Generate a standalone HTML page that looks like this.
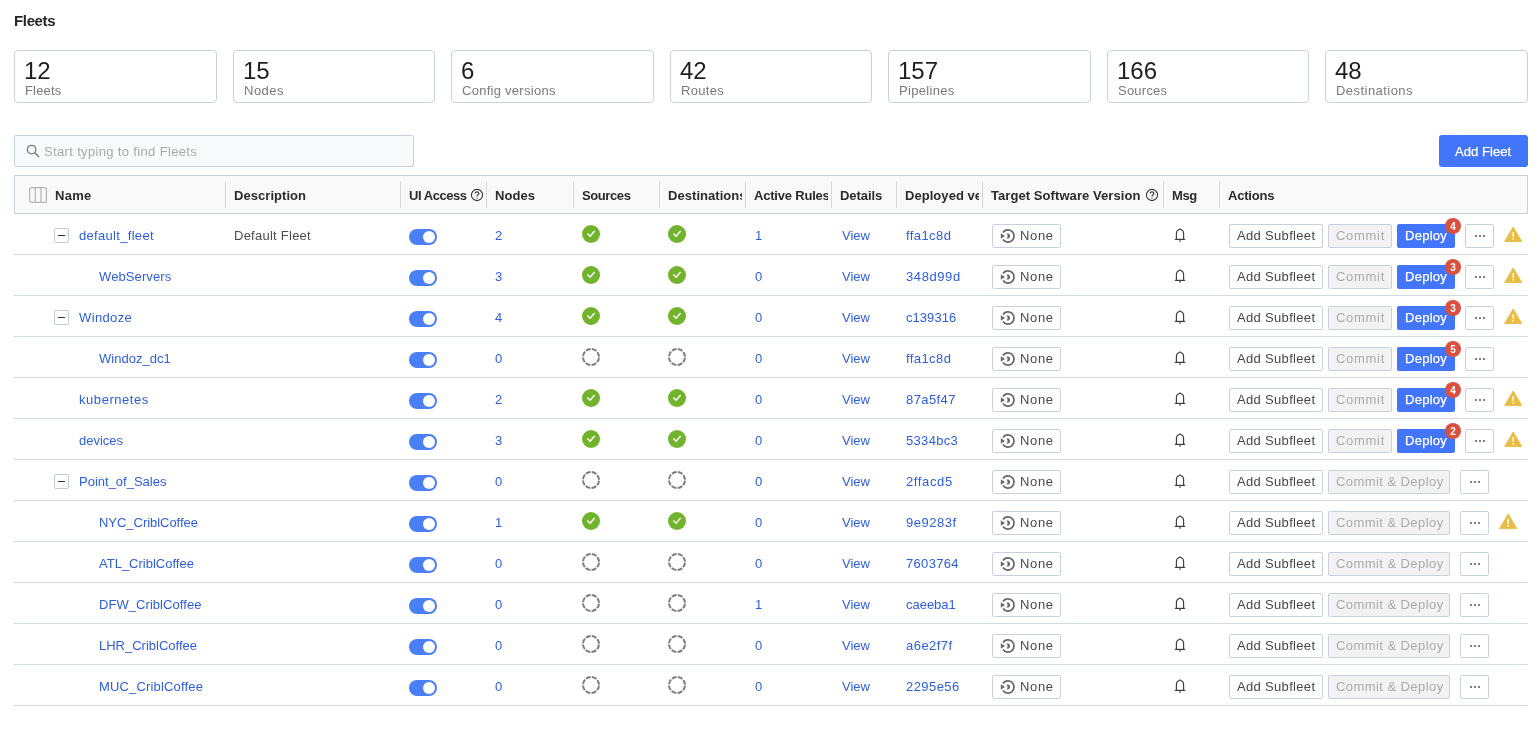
<!DOCTYPE html><html><head><meta charset="utf-8"><style>
html,body{margin:0;padding:0;background:#fff;}
body{width:1540px;height:732px;overflow:hidden;position:relative;font-family:"Liberation Sans", sans-serif;}
#root{position:absolute;left:0;top:0;width:1540px;height:732px;will-change:transform;background:#fff;}
.t{position:absolute;white-space:nowrap;}
.ic{position:absolute;display:block;}
.card{position:absolute;top:50px;height:53px;border:1px solid #c9d1dc;border-radius:4px;box-sizing:border-box;}
.search{position:absolute;left:14px;top:135px;width:398px;height:30px;border:1px solid #c9d1dc;background:#f9fafb;border-radius:2px;}
.btnp{position:absolute;background:#4275fa;border-radius:3px;}
.thead{position:absolute;left:14px;top:175px;width:1512px;height:37px;border:1px solid #c9d1dc;background:#f9f9fa;}
.sep{position:absolute;top:181px;width:1px;height:27px;background:#d6d9dd;}
.hclip{position:absolute;top:176px;height:37px;overflow:hidden;}
.rline{position:absolute;left:14px;width:1514px;height:1px;background:#d3d9e1;}
.cbox{position:absolute;left:54px;width:13px;height:13px;border:1px solid #c3cad4;border-radius:2px;background:#fff;}
.cbox::after{content:"";position:absolute;left:3px;top:5.5px;width:7px;height:1.2px;background:#333;}
.tog{position:absolute;left:409px;width:28px;height:16px;border-radius:8px;background:#4a7ff6;}
.knob{position:absolute;left:14px;top:2px;width:12px;height:12px;border-radius:6px;background:#fff;}
.btn{position:absolute;border:1px solid #c9d1dc;border-radius:2px;background:#fff;box-sizing:border-box;}
.btn.dis{background:#f2f2f2;}
.badge{position:absolute;width:16px;height:16px;border-radius:8px;background:#d9503f;color:#fff;font-size:10px;font-weight:700;line-height:18px;text-align:center;font-family:"Liberation Sans", sans-serif;}
.dot{position:absolute;width:2px;height:2px;border-radius:50%;background:#555;}
</style></head><body><div id="root"><div class="t" style="left:14px;top:13px;font-size:15px;line-height:15px;font-weight:700;color:#262626;letter-spacing:-0.35px;">Fleets</div>
<div class="card" style="left:14.00px;width:202.57px"></div>
<div class="t" style="left:24px;top:59px;font-size:24px;line-height:24px;font-weight:400;color:#1e1e1e;letter-spacing:0px;">12</div>
<div class="t" style="left:25px;top:84px;font-size:13px;line-height:13px;font-weight:400;color:#7a7a7a;letter-spacing:0.18px;">Fleets</div>
<div class="card" style="left:232.57px;width:202.57px"></div>
<div class="t" style="left:243px;top:59px;font-size:24px;line-height:24px;font-weight:400;color:#1e1e1e;letter-spacing:0px;">15</div>
<div class="t" style="left:244px;top:84px;font-size:13px;line-height:13px;font-weight:400;color:#7a7a7a;letter-spacing:0.5px;">Nodes</div>
<div class="card" style="left:451.14px;width:202.57px"></div>
<div class="t" style="left:461px;top:59px;font-size:24px;line-height:24px;font-weight:400;color:#1e1e1e;letter-spacing:0px;">6</div>
<div class="t" style="left:462px;top:84px;font-size:13px;line-height:13px;font-weight:400;color:#7a7a7a;letter-spacing:0.271px;">Config versions</div>
<div class="card" style="left:669.71px;width:202.57px"></div>
<div class="t" style="left:680px;top:59px;font-size:24px;line-height:24px;font-weight:400;color:#1e1e1e;letter-spacing:0px;">42</div>
<div class="t" style="left:681px;top:84px;font-size:13px;line-height:13px;font-weight:400;color:#7a7a7a;letter-spacing:0.3px;">Routes</div>
<div class="card" style="left:888.29px;width:202.57px"></div>
<div class="t" style="left:898px;top:59px;font-size:24px;line-height:24px;font-weight:400;color:#1e1e1e;letter-spacing:0px;">157</div>
<div class="t" style="left:899px;top:84px;font-size:13px;line-height:13px;font-weight:400;color:#7a7a7a;letter-spacing:0.325px;">Pipelines</div>
<div class="card" style="left:1106.86px;width:202.57px"></div>
<div class="t" style="left:1117px;top:59px;font-size:24px;line-height:24px;font-weight:400;color:#1e1e1e;letter-spacing:0px;">166</div>
<div class="t" style="left:1118px;top:84px;font-size:13px;line-height:13px;font-weight:400;color:#7a7a7a;letter-spacing:0.233px;">Sources</div>
<div class="card" style="left:1325.43px;width:202.57px"></div>
<div class="t" style="left:1335px;top:59px;font-size:24px;line-height:24px;font-weight:400;color:#1e1e1e;letter-spacing:0px;">48</div>
<div class="t" style="left:1336px;top:84px;font-size:13px;line-height:13px;font-weight:400;color:#7a7a7a;letter-spacing:0.455px;">Destinations</div>
<div class="search"></div>
<svg class="ic" style="left:26px;top:144px" width="14" height="14" viewBox="0 0 14 14"><circle cx="5.6" cy="5.6" r="4.3" fill="none" stroke="#7b7b7b" stroke-width="1.3"/><line x1="8.7" y1="8.7" x2="12.6" y2="12.6" stroke="#7b7b7b" stroke-width="1.4" stroke-linecap="round"/></svg>
<div class="t" style="left:44px;top:145px;font-size:13px;line-height:13px;font-weight:400;color:#a9a9a9;letter-spacing:0.346px;">Start typing to find Fleets</div>
<div class="btnp" style="left:1439px;top:135px;width:89px;height:32px"></div>
<div class="t" style="left:1455px;top:145px;font-size:13px;line-height:13px;font-weight:400;color:#ffffff;letter-spacing:0.062px;-webkit-text-stroke:0.25px #fff;">Add Fleet</div>
<div class="thead"></div>
<div class="sep" style="left:225px"></div>
<div class="sep" style="left:400px"></div>
<div class="sep" style="left:486px"></div>
<div class="sep" style="left:573px"></div>
<div class="sep" style="left:659px"></div>
<div class="sep" style="left:745px"></div>
<div class="sep" style="left:831px"></div>
<div class="sep" style="left:896px"></div>
<div class="sep" style="left:982px"></div>
<div class="sep" style="left:1163px"></div>
<div class="sep" style="left:1219px"></div>
<div class="hclip" style="left:55px;width:167px"><div class="t" style="left:0;top:13px;font-size:13px;line-height:13px;font-weight:700;color:#2b2b2b;letter-spacing:0.3px">Name</div></div>
<div class="hclip" style="left:234px;width:163px"><div class="t" style="left:0;top:13px;font-size:13px;line-height:13px;font-weight:700;color:#2b2b2b;letter-spacing:0.05px">Description</div></div>
<div class="hclip" style="left:409px;width:74px"><div class="t" style="left:0;top:13px;font-size:13px;line-height:13px;font-weight:700;color:#2b2b2b;letter-spacing:-0.45px">UI Access</div></div>
<div class="hclip" style="left:495px;width:75px"><div class="t" style="left:0;top:13px;font-size:13px;line-height:13px;font-weight:700;color:#2b2b2b;letter-spacing:0.05px">Nodes</div></div>
<div class="hclip" style="left:582px;width:74px"><div class="t" style="left:0;top:13px;font-size:13px;line-height:13px;font-weight:700;color:#2b2b2b;letter-spacing:-0.4px">Sources</div></div>
<div class="hclip" style="left:668px;width:74px"><div class="t" style="left:0;top:13px;font-size:13px;line-height:13px;font-weight:700;color:#2b2b2b;letter-spacing:0.05px">Destinations</div></div>
<div class="hclip" style="left:754px;width:74px"><div class="t" style="left:0;top:13px;font-size:13px;line-height:13px;font-weight:700;color:#2b2b2b;letter-spacing:-0.2px">Active Rules</div></div>
<div class="hclip" style="left:840px;width:53px"><div class="t" style="left:0;top:13px;font-size:13px;line-height:13px;font-weight:700;color:#2b2b2b;letter-spacing:-0.05px">Details</div></div>
<div class="hclip" style="left:905px;width:74px"><div class="t" style="left:0;top:13px;font-size:13px;line-height:13px;font-weight:700;color:#2b2b2b;letter-spacing:0.05px">Deployed version</div></div>
<div class="hclip" style="left:991px;width:169px"><div class="t" style="left:0;top:13px;font-size:13px;line-height:13px;font-weight:700;color:#2b2b2b;letter-spacing:0.07px">Target Software Version</div></div>
<div class="hclip" style="left:1172px;width:44px"><div class="t" style="left:0;top:13px;font-size:13px;line-height:13px;font-weight:700;color:#2b2b2b;letter-spacing:-0.45px">Msg</div></div>
<div class="hclip" style="left:1228px;width:297px"><div class="t" style="left:0;top:13px;font-size:13px;line-height:13px;font-weight:700;color:#2b2b2b;letter-spacing:-0.2px">Actions</div></div>
<svg class="ic" style="left:29px;top:187px" width="18" height="16" viewBox="0 0 18 16"><rect x="0.6" y="0.6" width="16.8" height="14.8" rx="2" fill="none" stroke="#b4b4b4" stroke-width="1.2"/><line x1="6.25" y1="1" x2="6.25" y2="15" stroke="#b4b4b4" stroke-width="1.2"/><line x1="12" y1="1" x2="12" y2="15" stroke="#b4b4b4" stroke-width="1.2"/></svg>
<svg class="ic" style="left:470px;top:187.5px" width="14" height="14" viewBox="0 0 14 14"><circle cx="7" cy="7" r="5.6" fill="none" stroke="#333" stroke-width="1.1"/><path d="M5.1 5.6 Q5.1 3.9 7 3.9 Q8.9 3.9 8.9 5.5 Q8.9 6.5 7.6 7.1 Q7 7.4 7 8.4" fill="none" stroke="#333" stroke-width="1.1"/><circle cx="7" cy="10.1" r="0.7" fill="#333"/></svg>
<svg class="ic" style="left:1144.5px;top:187.5px" width="14" height="14" viewBox="0 0 14 14"><circle cx="7" cy="7" r="5.6" fill="none" stroke="#333" stroke-width="1.1"/><path d="M5.1 5.6 Q5.1 3.9 7 3.9 Q8.9 3.9 8.9 5.5 Q8.9 6.5 7.6 7.1 Q7 7.4 7 8.4" fill="none" stroke="#333" stroke-width="1.1"/><circle cx="7" cy="10.1" r="0.7" fill="#333"/></svg>
<div class="rline" style="top:254px"></div>
<div class="cbox" style="top:228px"></div>
<div class="t" style="left:79px;top:229px;font-size:13px;line-height:13px;font-weight:400;color:#2d5fdc;letter-spacing:0.308px;">default_fleet</div>
<div class="t" style="left:234px;top:229px;font-size:13px;line-height:13px;font-weight:400;color:#4d4d4d;letter-spacing:0.25px;">Default Fleet</div>
<div class="tog" style="top:229px"><div class="knob"></div></div>
<div class="t" style="left:495px;top:229px;font-size:13px;line-height:13px;font-weight:400;color:#2d5fdc;letter-spacing:0px;">2</div>
<svg class="ic" style="left:582px;top:225px" width="18" height="18" viewBox="0 0 18 18"><circle cx="9" cy="9" r="9" fill="#71b32d"/><path d="M5.4 8.5 L8.1 11.2 L12.6 5.9" fill="none" stroke="#fff" stroke-width="1.5"/></svg>
<svg class="ic" style="left:668px;top:225px" width="18" height="18" viewBox="0 0 18 18"><circle cx="9" cy="9" r="9" fill="#71b32d"/><path d="M5.4 8.5 L8.1 11.2 L12.6 5.9" fill="none" stroke="#fff" stroke-width="1.5"/></svg>
<div class="t" style="left:755px;top:229px;font-size:13px;line-height:13px;font-weight:400;color:#2d5fdc;letter-spacing:0px;">1</div>
<div class="t" style="left:842px;top:229px;font-size:13px;line-height:13px;font-weight:400;color:#2d5fdc;letter-spacing:0.0px;">View</div>
<div class="t" style="left:906px;top:229px;font-size:13px;line-height:13px;font-weight:400;color:#2d5fdc;letter-spacing:0.417px;">ffa1c8d</div>
<div class="btn" style="left:992px;top:224px;width:69px;height:24px"></div>
<svg class="ic" style="left:1000px;top:228px" width="16" height="16" viewBox="0 0 16 16"><path d="M3.0 4.4 A6.1 6.1 0 1 1 3.0 11.6" fill="none" stroke="#666" stroke-width="1.7"/><path d="M0.8 5.2 L5 8 L0.8 10.8 Z" fill="#666"/><path d="M6.4 5.64 A2.6 2.6 0 1 1 6.4 10.36 A3.2 3.2 0 0 0 6.4 5.64 Z" fill="#666"/></svg>
<div class="t" style="left:1020px;top:229px;font-size:13px;line-height:13px;font-weight:400;color:#4a4a4a;letter-spacing:0.667px;">None</div>
<svg class="ic" style="left:1173px;top:227px" width="14" height="16" viewBox="0 0 14 16"><path d="M3.4 12.2 V6.6 Q3.4 3.4 5.9 2.8 L7 1.9 L8.1 2.8 Q10.6 3.4 10.6 6.6 V12.2" fill="none" stroke="#3d3d3d" stroke-width="1.15"/><line x1="1.9" y1="12.4" x2="12.1" y2="12.4" stroke="#3d3d3d" stroke-width="1.2"/><path d="M5.9 13.6 Q7 15 8.1 13.6" fill="none" stroke="#3d3d3d" stroke-width="1"/></svg>
<div class="btn" style="left:1229px;top:224px;width:94px;height:24px"></div>
<div class="t" style="left:1237px;top:229px;font-size:13px;line-height:13px;font-weight:400;color:#474747;letter-spacing:0.327px;">Add Subfleet</div>
<div class="btn dis" style="left:1328px;top:224px;width:64px;height:24px"></div>
<div class="t" style="left:1336px;top:229px;font-size:13px;line-height:13px;font-weight:400;color:#ababab;letter-spacing:0.7px;">Commit</div>
<div class="btnp" style="left:1397px;top:224px;width:58px;height:24px;border-radius:2px"></div>
<div class="t" style="left:1405px;top:229px;font-size:13px;line-height:13px;font-weight:400;color:#fff;letter-spacing:0.26px;-webkit-text-stroke:0.25px #fff;">Deploy</div>
<div class="badge" style="left:1445px;top:218px">4</div>
<div class="btn" style="left:1465px;top:224px;width:29px;height:24px"></div>
<div class="dot" style="left:1474.5px;top:234.5px"></div>
<div class="dot" style="left:1478.5px;top:234.5px"></div>
<div class="dot" style="left:1482.5px;top:234.5px"></div>
<svg class="ic" style="left:1504px;top:226px" width="19" height="17" viewBox="0 0 19 17"><path d="M9.2 0.9 L17.8 15.6 L0.6 15.6 Z" fill="#e9bc45" stroke="#e9bc45" stroke-width="0.9" stroke-linejoin="round"/><rect x="8.45" y="6.2" width="1.5" height="4.6" fill="#fff"/><rect x="8.45" y="11.9" width="1.5" height="1.7" fill="#fff"/></svg>
<div class="rline" style="top:295px"></div>
<div class="t" style="left:99px;top:270px;font-size:13px;line-height:13px;font-weight:400;color:#2d5fdc;letter-spacing:0.1px;">WebServers</div>
<div class="tog" style="top:270px"><div class="knob"></div></div>
<div class="t" style="left:495px;top:270px;font-size:13px;line-height:13px;font-weight:400;color:#2d5fdc;letter-spacing:0px;">3</div>
<svg class="ic" style="left:582px;top:266px" width="18" height="18" viewBox="0 0 18 18"><circle cx="9" cy="9" r="9" fill="#71b32d"/><path d="M5.4 8.5 L8.1 11.2 L12.6 5.9" fill="none" stroke="#fff" stroke-width="1.5"/></svg>
<svg class="ic" style="left:668px;top:266px" width="18" height="18" viewBox="0 0 18 18"><circle cx="9" cy="9" r="9" fill="#71b32d"/><path d="M5.4 8.5 L8.1 11.2 L12.6 5.9" fill="none" stroke="#fff" stroke-width="1.5"/></svg>
<div class="t" style="left:755px;top:270px;font-size:13px;line-height:13px;font-weight:400;color:#2d5fdc;letter-spacing:0px;">0</div>
<div class="t" style="left:842px;top:270px;font-size:13px;line-height:13px;font-weight:400;color:#2d5fdc;letter-spacing:0.0px;">View</div>
<div class="t" style="left:906px;top:270px;font-size:13px;line-height:13px;font-weight:400;color:#2d5fdc;letter-spacing:0.583px;">348d99d</div>
<div class="btn" style="left:992px;top:265px;width:69px;height:24px"></div>
<svg class="ic" style="left:1000px;top:269px" width="16" height="16" viewBox="0 0 16 16"><path d="M3.0 4.4 A6.1 6.1 0 1 1 3.0 11.6" fill="none" stroke="#666" stroke-width="1.7"/><path d="M0.8 5.2 L5 8 L0.8 10.8 Z" fill="#666"/><path d="M6.4 5.64 A2.6 2.6 0 1 1 6.4 10.36 A3.2 3.2 0 0 0 6.4 5.64 Z" fill="#666"/></svg>
<div class="t" style="left:1020px;top:270px;font-size:13px;line-height:13px;font-weight:400;color:#4a4a4a;letter-spacing:0.667px;">None</div>
<svg class="ic" style="left:1173px;top:268px" width="14" height="16" viewBox="0 0 14 16"><path d="M3.4 12.2 V6.6 Q3.4 3.4 5.9 2.8 L7 1.9 L8.1 2.8 Q10.6 3.4 10.6 6.6 V12.2" fill="none" stroke="#3d3d3d" stroke-width="1.15"/><line x1="1.9" y1="12.4" x2="12.1" y2="12.4" stroke="#3d3d3d" stroke-width="1.2"/><path d="M5.9 13.6 Q7 15 8.1 13.6" fill="none" stroke="#3d3d3d" stroke-width="1"/></svg>
<div class="btn" style="left:1229px;top:265px;width:94px;height:24px"></div>
<div class="t" style="left:1237px;top:270px;font-size:13px;line-height:13px;font-weight:400;color:#474747;letter-spacing:0.327px;">Add Subfleet</div>
<div class="btn dis" style="left:1328px;top:265px;width:64px;height:24px"></div>
<div class="t" style="left:1336px;top:270px;font-size:13px;line-height:13px;font-weight:400;color:#ababab;letter-spacing:0.7px;">Commit</div>
<div class="btnp" style="left:1397px;top:265px;width:58px;height:24px;border-radius:2px"></div>
<div class="t" style="left:1405px;top:270px;font-size:13px;line-height:13px;font-weight:400;color:#fff;letter-spacing:0.26px;-webkit-text-stroke:0.25px #fff;">Deploy</div>
<div class="badge" style="left:1445px;top:259px">3</div>
<div class="btn" style="left:1465px;top:265px;width:29px;height:24px"></div>
<div class="dot" style="left:1474.5px;top:275.5px"></div>
<div class="dot" style="left:1478.5px;top:275.5px"></div>
<div class="dot" style="left:1482.5px;top:275.5px"></div>
<svg class="ic" style="left:1504px;top:267px" width="19" height="17" viewBox="0 0 19 17"><path d="M9.2 0.9 L17.8 15.6 L0.6 15.6 Z" fill="#e9bc45" stroke="#e9bc45" stroke-width="0.9" stroke-linejoin="round"/><rect x="8.45" y="6.2" width="1.5" height="4.6" fill="#fff"/><rect x="8.45" y="11.9" width="1.5" height="1.7" fill="#fff"/></svg>
<div class="rline" style="top:336px"></div>
<div class="cbox" style="top:310px"></div>
<div class="t" style="left:79px;top:311px;font-size:13px;line-height:13px;font-weight:400;color:#2d5fdc;letter-spacing:0.367px;">Windoze</div>
<div class="tog" style="top:311px"><div class="knob"></div></div>
<div class="t" style="left:495px;top:311px;font-size:13px;line-height:13px;font-weight:400;color:#2d5fdc;letter-spacing:0px;">4</div>
<svg class="ic" style="left:582px;top:307px" width="18" height="18" viewBox="0 0 18 18"><circle cx="9" cy="9" r="9" fill="#71b32d"/><path d="M5.4 8.5 L8.1 11.2 L12.6 5.9" fill="none" stroke="#fff" stroke-width="1.5"/></svg>
<svg class="ic" style="left:668px;top:307px" width="18" height="18" viewBox="0 0 18 18"><circle cx="9" cy="9" r="9" fill="#71b32d"/><path d="M5.4 8.5 L8.1 11.2 L12.6 5.9" fill="none" stroke="#fff" stroke-width="1.5"/></svg>
<div class="t" style="left:755px;top:311px;font-size:13px;line-height:13px;font-weight:400;color:#2d5fdc;letter-spacing:0px;">0</div>
<div class="t" style="left:842px;top:311px;font-size:13px;line-height:13px;font-weight:400;color:#2d5fdc;letter-spacing:0.0px;">View</div>
<div class="t" style="left:906px;top:311px;font-size:13px;line-height:13px;font-weight:400;color:#2d5fdc;letter-spacing:0.05px;">c139316</div>
<div class="btn" style="left:992px;top:306px;width:69px;height:24px"></div>
<svg class="ic" style="left:1000px;top:310px" width="16" height="16" viewBox="0 0 16 16"><path d="M3.0 4.4 A6.1 6.1 0 1 1 3.0 11.6" fill="none" stroke="#666" stroke-width="1.7"/><path d="M0.8 5.2 L5 8 L0.8 10.8 Z" fill="#666"/><path d="M6.4 5.64 A2.6 2.6 0 1 1 6.4 10.36 A3.2 3.2 0 0 0 6.4 5.64 Z" fill="#666"/></svg>
<div class="t" style="left:1020px;top:311px;font-size:13px;line-height:13px;font-weight:400;color:#4a4a4a;letter-spacing:0.667px;">None</div>
<svg class="ic" style="left:1173px;top:309px" width="14" height="16" viewBox="0 0 14 16"><path d="M3.4 12.2 V6.6 Q3.4 3.4 5.9 2.8 L7 1.9 L8.1 2.8 Q10.6 3.4 10.6 6.6 V12.2" fill="none" stroke="#3d3d3d" stroke-width="1.15"/><line x1="1.9" y1="12.4" x2="12.1" y2="12.4" stroke="#3d3d3d" stroke-width="1.2"/><path d="M5.9 13.6 Q7 15 8.1 13.6" fill="none" stroke="#3d3d3d" stroke-width="1"/></svg>
<div class="btn" style="left:1229px;top:306px;width:94px;height:24px"></div>
<div class="t" style="left:1237px;top:311px;font-size:13px;line-height:13px;font-weight:400;color:#474747;letter-spacing:0.327px;">Add Subfleet</div>
<div class="btn dis" style="left:1328px;top:306px;width:64px;height:24px"></div>
<div class="t" style="left:1336px;top:311px;font-size:13px;line-height:13px;font-weight:400;color:#ababab;letter-spacing:0.7px;">Commit</div>
<div class="btnp" style="left:1397px;top:306px;width:58px;height:24px;border-radius:2px"></div>
<div class="t" style="left:1405px;top:311px;font-size:13px;line-height:13px;font-weight:400;color:#fff;letter-spacing:0.26px;-webkit-text-stroke:0.25px #fff;">Deploy</div>
<div class="badge" style="left:1445px;top:300px">3</div>
<div class="btn" style="left:1465px;top:306px;width:29px;height:24px"></div>
<div class="dot" style="left:1474.5px;top:316.5px"></div>
<div class="dot" style="left:1478.5px;top:316.5px"></div>
<div class="dot" style="left:1482.5px;top:316.5px"></div>
<svg class="ic" style="left:1504px;top:308px" width="19" height="17" viewBox="0 0 19 17"><path d="M9.2 0.9 L17.8 15.6 L0.6 15.6 Z" fill="#e9bc45" stroke="#e9bc45" stroke-width="0.9" stroke-linejoin="round"/><rect x="8.45" y="6.2" width="1.5" height="4.6" fill="#fff"/><rect x="8.45" y="11.9" width="1.5" height="1.7" fill="#fff"/></svg>
<div class="rline" style="top:377px"></div>
<div class="t" style="left:99px;top:352px;font-size:13px;line-height:13px;font-weight:400;color:#2d5fdc;letter-spacing:0.033px;">Windoz_dc1</div>
<div class="tog" style="top:352px"><div class="knob"></div></div>
<div class="t" style="left:495px;top:352px;font-size:13px;line-height:13px;font-weight:400;color:#2d5fdc;letter-spacing:0px;">0</div>
<svg class="ic" style="left:582px;top:348px" width="18" height="18" viewBox="0 0 18 18"><circle cx="9" cy="9" r="8" fill="none" stroke="#7c7c7c" stroke-width="2" stroke-dasharray="5.03 1.25" stroke-dashoffset="5.655"/></svg>
<svg class="ic" style="left:668px;top:348px" width="18" height="18" viewBox="0 0 18 18"><circle cx="9" cy="9" r="8" fill="none" stroke="#7c7c7c" stroke-width="2" stroke-dasharray="5.03 1.25" stroke-dashoffset="5.655"/></svg>
<div class="t" style="left:755px;top:352px;font-size:13px;line-height:13px;font-weight:400;color:#2d5fdc;letter-spacing:0px;">0</div>
<div class="t" style="left:842px;top:352px;font-size:13px;line-height:13px;font-weight:400;color:#2d5fdc;letter-spacing:0.0px;">View</div>
<div class="t" style="left:906px;top:352px;font-size:13px;line-height:13px;font-weight:400;color:#2d5fdc;letter-spacing:0.417px;">ffa1c8d</div>
<div class="btn" style="left:992px;top:347px;width:69px;height:24px"></div>
<svg class="ic" style="left:1000px;top:351px" width="16" height="16" viewBox="0 0 16 16"><path d="M3.0 4.4 A6.1 6.1 0 1 1 3.0 11.6" fill="none" stroke="#666" stroke-width="1.7"/><path d="M0.8 5.2 L5 8 L0.8 10.8 Z" fill="#666"/><path d="M6.4 5.64 A2.6 2.6 0 1 1 6.4 10.36 A3.2 3.2 0 0 0 6.4 5.64 Z" fill="#666"/></svg>
<div class="t" style="left:1020px;top:352px;font-size:13px;line-height:13px;font-weight:400;color:#4a4a4a;letter-spacing:0.667px;">None</div>
<svg class="ic" style="left:1173px;top:350px" width="14" height="16" viewBox="0 0 14 16"><path d="M3.4 12.2 V6.6 Q3.4 3.4 5.9 2.8 L7 1.9 L8.1 2.8 Q10.6 3.4 10.6 6.6 V12.2" fill="none" stroke="#3d3d3d" stroke-width="1.15"/><line x1="1.9" y1="12.4" x2="12.1" y2="12.4" stroke="#3d3d3d" stroke-width="1.2"/><path d="M5.9 13.6 Q7 15 8.1 13.6" fill="none" stroke="#3d3d3d" stroke-width="1"/></svg>
<div class="btn" style="left:1229px;top:347px;width:94px;height:24px"></div>
<div class="t" style="left:1237px;top:352px;font-size:13px;line-height:13px;font-weight:400;color:#474747;letter-spacing:0.327px;">Add Subfleet</div>
<div class="btn dis" style="left:1328px;top:347px;width:64px;height:24px"></div>
<div class="t" style="left:1336px;top:352px;font-size:13px;line-height:13px;font-weight:400;color:#ababab;letter-spacing:0.7px;">Commit</div>
<div class="btnp" style="left:1397px;top:347px;width:58px;height:24px;border-radius:2px"></div>
<div class="t" style="left:1405px;top:352px;font-size:13px;line-height:13px;font-weight:400;color:#fff;letter-spacing:0.26px;-webkit-text-stroke:0.25px #fff;">Deploy</div>
<div class="badge" style="left:1445px;top:341px">5</div>
<div class="btn" style="left:1465px;top:347px;width:29px;height:24px"></div>
<div class="dot" style="left:1474.5px;top:357.5px"></div>
<div class="dot" style="left:1478.5px;top:357.5px"></div>
<div class="dot" style="left:1482.5px;top:357.5px"></div>
<div class="rline" style="top:418px"></div>
<div class="t" style="left:79px;top:393px;font-size:13px;line-height:13px;font-weight:400;color:#2d5fdc;letter-spacing:0.556px;">kubernetes</div>
<div class="tog" style="top:393px"><div class="knob"></div></div>
<div class="t" style="left:495px;top:393px;font-size:13px;line-height:13px;font-weight:400;color:#2d5fdc;letter-spacing:0px;">2</div>
<svg class="ic" style="left:582px;top:389px" width="18" height="18" viewBox="0 0 18 18"><circle cx="9" cy="9" r="9" fill="#71b32d"/><path d="M5.4 8.5 L8.1 11.2 L12.6 5.9" fill="none" stroke="#fff" stroke-width="1.5"/></svg>
<svg class="ic" style="left:668px;top:389px" width="18" height="18" viewBox="0 0 18 18"><circle cx="9" cy="9" r="9" fill="#71b32d"/><path d="M5.4 8.5 L8.1 11.2 L12.6 5.9" fill="none" stroke="#fff" stroke-width="1.5"/></svg>
<div class="t" style="left:755px;top:393px;font-size:13px;line-height:13px;font-weight:400;color:#2d5fdc;letter-spacing:0px;">0</div>
<div class="t" style="left:842px;top:393px;font-size:13px;line-height:13px;font-weight:400;color:#2d5fdc;letter-spacing:0.0px;">View</div>
<div class="t" style="left:906px;top:393px;font-size:13px;line-height:13px;font-weight:400;color:#2d5fdc;letter-spacing:0.4px;">87a5f47</div>
<div class="btn" style="left:992px;top:388px;width:69px;height:24px"></div>
<svg class="ic" style="left:1000px;top:392px" width="16" height="16" viewBox="0 0 16 16"><path d="M3.0 4.4 A6.1 6.1 0 1 1 3.0 11.6" fill="none" stroke="#666" stroke-width="1.7"/><path d="M0.8 5.2 L5 8 L0.8 10.8 Z" fill="#666"/><path d="M6.4 5.64 A2.6 2.6 0 1 1 6.4 10.36 A3.2 3.2 0 0 0 6.4 5.64 Z" fill="#666"/></svg>
<div class="t" style="left:1020px;top:393px;font-size:13px;line-height:13px;font-weight:400;color:#4a4a4a;letter-spacing:0.667px;">None</div>
<svg class="ic" style="left:1173px;top:391px" width="14" height="16" viewBox="0 0 14 16"><path d="M3.4 12.2 V6.6 Q3.4 3.4 5.9 2.8 L7 1.9 L8.1 2.8 Q10.6 3.4 10.6 6.6 V12.2" fill="none" stroke="#3d3d3d" stroke-width="1.15"/><line x1="1.9" y1="12.4" x2="12.1" y2="12.4" stroke="#3d3d3d" stroke-width="1.2"/><path d="M5.9 13.6 Q7 15 8.1 13.6" fill="none" stroke="#3d3d3d" stroke-width="1"/></svg>
<div class="btn" style="left:1229px;top:388px;width:94px;height:24px"></div>
<div class="t" style="left:1237px;top:393px;font-size:13px;line-height:13px;font-weight:400;color:#474747;letter-spacing:0.327px;">Add Subfleet</div>
<div class="btn dis" style="left:1328px;top:388px;width:64px;height:24px"></div>
<div class="t" style="left:1336px;top:393px;font-size:13px;line-height:13px;font-weight:400;color:#ababab;letter-spacing:0.7px;">Commit</div>
<div class="btnp" style="left:1397px;top:388px;width:58px;height:24px;border-radius:2px"></div>
<div class="t" style="left:1405px;top:393px;font-size:13px;line-height:13px;font-weight:400;color:#fff;letter-spacing:0.26px;-webkit-text-stroke:0.25px #fff;">Deploy</div>
<div class="badge" style="left:1445px;top:382px">4</div>
<div class="btn" style="left:1465px;top:388px;width:29px;height:24px"></div>
<div class="dot" style="left:1474.5px;top:398.5px"></div>
<div class="dot" style="left:1478.5px;top:398.5px"></div>
<div class="dot" style="left:1482.5px;top:398.5px"></div>
<svg class="ic" style="left:1504px;top:390px" width="19" height="17" viewBox="0 0 19 17"><path d="M9.2 0.9 L17.8 15.6 L0.6 15.6 Z" fill="#e9bc45" stroke="#e9bc45" stroke-width="0.9" stroke-linejoin="round"/><rect x="8.45" y="6.2" width="1.5" height="4.6" fill="#fff"/><rect x="8.45" y="11.9" width="1.5" height="1.7" fill="#fff"/></svg>
<div class="rline" style="top:459px"></div>
<div class="t" style="left:79px;top:434px;font-size:13px;line-height:13px;font-weight:400;color:#2d5fdc;letter-spacing:0.0px;">devices</div>
<div class="tog" style="top:434px"><div class="knob"></div></div>
<div class="t" style="left:495px;top:434px;font-size:13px;line-height:13px;font-weight:400;color:#2d5fdc;letter-spacing:0px;">3</div>
<svg class="ic" style="left:582px;top:430px" width="18" height="18" viewBox="0 0 18 18"><circle cx="9" cy="9" r="9" fill="#71b32d"/><path d="M5.4 8.5 L8.1 11.2 L12.6 5.9" fill="none" stroke="#fff" stroke-width="1.5"/></svg>
<svg class="ic" style="left:668px;top:430px" width="18" height="18" viewBox="0 0 18 18"><circle cx="9" cy="9" r="9" fill="#71b32d"/><path d="M5.4 8.5 L8.1 11.2 L12.6 5.9" fill="none" stroke="#fff" stroke-width="1.5"/></svg>
<div class="t" style="left:755px;top:434px;font-size:13px;line-height:13px;font-weight:400;color:#2d5fdc;letter-spacing:0px;">0</div>
<div class="t" style="left:842px;top:434px;font-size:13px;line-height:13px;font-weight:400;color:#2d5fdc;letter-spacing:0.0px;">View</div>
<div class="t" style="left:906px;top:434px;font-size:13px;line-height:13px;font-weight:400;color:#2d5fdc;letter-spacing:0.317px;">5334bc3</div>
<div class="btn" style="left:992px;top:429px;width:69px;height:24px"></div>
<svg class="ic" style="left:1000px;top:433px" width="16" height="16" viewBox="0 0 16 16"><path d="M3.0 4.4 A6.1 6.1 0 1 1 3.0 11.6" fill="none" stroke="#666" stroke-width="1.7"/><path d="M0.8 5.2 L5 8 L0.8 10.8 Z" fill="#666"/><path d="M6.4 5.64 A2.6 2.6 0 1 1 6.4 10.36 A3.2 3.2 0 0 0 6.4 5.64 Z" fill="#666"/></svg>
<div class="t" style="left:1020px;top:434px;font-size:13px;line-height:13px;font-weight:400;color:#4a4a4a;letter-spacing:0.667px;">None</div>
<svg class="ic" style="left:1173px;top:432px" width="14" height="16" viewBox="0 0 14 16"><path d="M3.4 12.2 V6.6 Q3.4 3.4 5.9 2.8 L7 1.9 L8.1 2.8 Q10.6 3.4 10.6 6.6 V12.2" fill="none" stroke="#3d3d3d" stroke-width="1.15"/><line x1="1.9" y1="12.4" x2="12.1" y2="12.4" stroke="#3d3d3d" stroke-width="1.2"/><path d="M5.9 13.6 Q7 15 8.1 13.6" fill="none" stroke="#3d3d3d" stroke-width="1"/></svg>
<div class="btn" style="left:1229px;top:429px;width:94px;height:24px"></div>
<div class="t" style="left:1237px;top:434px;font-size:13px;line-height:13px;font-weight:400;color:#474747;letter-spacing:0.327px;">Add Subfleet</div>
<div class="btn dis" style="left:1328px;top:429px;width:64px;height:24px"></div>
<div class="t" style="left:1336px;top:434px;font-size:13px;line-height:13px;font-weight:400;color:#ababab;letter-spacing:0.7px;">Commit</div>
<div class="btnp" style="left:1397px;top:429px;width:58px;height:24px;border-radius:2px"></div>
<div class="t" style="left:1405px;top:434px;font-size:13px;line-height:13px;font-weight:400;color:#fff;letter-spacing:0.26px;-webkit-text-stroke:0.25px #fff;">Deploy</div>
<div class="badge" style="left:1445px;top:423px">2</div>
<div class="btn" style="left:1465px;top:429px;width:29px;height:24px"></div>
<div class="dot" style="left:1474.5px;top:439.5px"></div>
<div class="dot" style="left:1478.5px;top:439.5px"></div>
<div class="dot" style="left:1482.5px;top:439.5px"></div>
<svg class="ic" style="left:1504px;top:431px" width="19" height="17" viewBox="0 0 19 17"><path d="M9.2 0.9 L17.8 15.6 L0.6 15.6 Z" fill="#e9bc45" stroke="#e9bc45" stroke-width="0.9" stroke-linejoin="round"/><rect x="8.45" y="6.2" width="1.5" height="4.6" fill="#fff"/><rect x="8.45" y="11.9" width="1.5" height="1.7" fill="#fff"/></svg>
<div class="rline" style="top:500px"></div>
<div class="cbox" style="top:474px"></div>
<div class="t" style="left:79px;top:475px;font-size:13px;line-height:13px;font-weight:400;color:#2d5fdc;letter-spacing:0.0px;">Point_of_Sales</div>
<div class="tog" style="top:475px"><div class="knob"></div></div>
<div class="t" style="left:495px;top:475px;font-size:13px;line-height:13px;font-weight:400;color:#2d5fdc;letter-spacing:0px;">0</div>
<svg class="ic" style="left:582px;top:471px" width="18" height="18" viewBox="0 0 18 18"><circle cx="9" cy="9" r="8" fill="none" stroke="#7c7c7c" stroke-width="2" stroke-dasharray="5.03 1.25" stroke-dashoffset="5.655"/></svg>
<svg class="ic" style="left:668px;top:471px" width="18" height="18" viewBox="0 0 18 18"><circle cx="9" cy="9" r="8" fill="none" stroke="#7c7c7c" stroke-width="2" stroke-dasharray="5.03 1.25" stroke-dashoffset="5.655"/></svg>
<div class="t" style="left:755px;top:475px;font-size:13px;line-height:13px;font-weight:400;color:#2d5fdc;letter-spacing:0px;">0</div>
<div class="t" style="left:842px;top:475px;font-size:13px;line-height:13px;font-weight:400;color:#2d5fdc;letter-spacing:0.0px;">View</div>
<div class="t" style="left:906px;top:475px;font-size:13px;line-height:13px;font-weight:400;color:#2d5fdc;letter-spacing:0.633px;">2ffacd5</div>
<div class="btn" style="left:992px;top:470px;width:69px;height:24px"></div>
<svg class="ic" style="left:1000px;top:474px" width="16" height="16" viewBox="0 0 16 16"><path d="M3.0 4.4 A6.1 6.1 0 1 1 3.0 11.6" fill="none" stroke="#666" stroke-width="1.7"/><path d="M0.8 5.2 L5 8 L0.8 10.8 Z" fill="#666"/><path d="M6.4 5.64 A2.6 2.6 0 1 1 6.4 10.36 A3.2 3.2 0 0 0 6.4 5.64 Z" fill="#666"/></svg>
<div class="t" style="left:1020px;top:475px;font-size:13px;line-height:13px;font-weight:400;color:#4a4a4a;letter-spacing:0.667px;">None</div>
<svg class="ic" style="left:1173px;top:473px" width="14" height="16" viewBox="0 0 14 16"><path d="M3.4 12.2 V6.6 Q3.4 3.4 5.9 2.8 L7 1.9 L8.1 2.8 Q10.6 3.4 10.6 6.6 V12.2" fill="none" stroke="#3d3d3d" stroke-width="1.15"/><line x1="1.9" y1="12.4" x2="12.1" y2="12.4" stroke="#3d3d3d" stroke-width="1.2"/><path d="M5.9 13.6 Q7 15 8.1 13.6" fill="none" stroke="#3d3d3d" stroke-width="1"/></svg>
<div class="btn" style="left:1229px;top:470px;width:94px;height:24px"></div>
<div class="t" style="left:1237px;top:475px;font-size:13px;line-height:13px;font-weight:400;color:#474747;letter-spacing:0.327px;">Add Subfleet</div>
<div class="btn dis" style="left:1328px;top:470px;width:122px;height:24px"></div>
<div class="t" style="left:1336px;top:475px;font-size:13px;line-height:13px;font-weight:400;color:#ababab;letter-spacing:0.429px;">Commit &amp; Deploy</div>
<div class="btn" style="left:1460px;top:470px;width:29px;height:24px"></div>
<div class="dot" style="left:1469.5px;top:480.5px"></div>
<div class="dot" style="left:1473.5px;top:480.5px"></div>
<div class="dot" style="left:1477.5px;top:480.5px"></div>
<div class="rline" style="top:541px"></div>
<div class="t" style="left:99px;top:516px;font-size:13px;line-height:13px;font-weight:400;color:#2d5fdc;letter-spacing:-0.036px;">NYC_CriblCoffee</div>
<div class="tog" style="top:516px"><div class="knob"></div></div>
<div class="t" style="left:495px;top:516px;font-size:13px;line-height:13px;font-weight:400;color:#2d5fdc;letter-spacing:0px;">1</div>
<svg class="ic" style="left:582px;top:512px" width="18" height="18" viewBox="0 0 18 18"><circle cx="9" cy="9" r="9" fill="#71b32d"/><path d="M5.4 8.5 L8.1 11.2 L12.6 5.9" fill="none" stroke="#fff" stroke-width="1.5"/></svg>
<svg class="ic" style="left:668px;top:512px" width="18" height="18" viewBox="0 0 18 18"><circle cx="9" cy="9" r="9" fill="#71b32d"/><path d="M5.4 8.5 L8.1 11.2 L12.6 5.9" fill="none" stroke="#fff" stroke-width="1.5"/></svg>
<div class="t" style="left:755px;top:516px;font-size:13px;line-height:13px;font-weight:400;color:#2d5fdc;letter-spacing:0px;">0</div>
<div class="t" style="left:842px;top:516px;font-size:13px;line-height:13px;font-weight:400;color:#2d5fdc;letter-spacing:0.0px;">View</div>
<div class="t" style="left:906px;top:516px;font-size:13px;line-height:13px;font-weight:400;color:#2d5fdc;letter-spacing:0.533px;">9e9283f</div>
<div class="btn" style="left:992px;top:511px;width:69px;height:24px"></div>
<svg class="ic" style="left:1000px;top:515px" width="16" height="16" viewBox="0 0 16 16"><path d="M3.0 4.4 A6.1 6.1 0 1 1 3.0 11.6" fill="none" stroke="#666" stroke-width="1.7"/><path d="M0.8 5.2 L5 8 L0.8 10.8 Z" fill="#666"/><path d="M6.4 5.64 A2.6 2.6 0 1 1 6.4 10.36 A3.2 3.2 0 0 0 6.4 5.64 Z" fill="#666"/></svg>
<div class="t" style="left:1020px;top:516px;font-size:13px;line-height:13px;font-weight:400;color:#4a4a4a;letter-spacing:0.667px;">None</div>
<svg class="ic" style="left:1173px;top:514px" width="14" height="16" viewBox="0 0 14 16"><path d="M3.4 12.2 V6.6 Q3.4 3.4 5.9 2.8 L7 1.9 L8.1 2.8 Q10.6 3.4 10.6 6.6 V12.2" fill="none" stroke="#3d3d3d" stroke-width="1.15"/><line x1="1.9" y1="12.4" x2="12.1" y2="12.4" stroke="#3d3d3d" stroke-width="1.2"/><path d="M5.9 13.6 Q7 15 8.1 13.6" fill="none" stroke="#3d3d3d" stroke-width="1"/></svg>
<div class="btn" style="left:1229px;top:511px;width:94px;height:24px"></div>
<div class="t" style="left:1237px;top:516px;font-size:13px;line-height:13px;font-weight:400;color:#474747;letter-spacing:0.327px;">Add Subfleet</div>
<div class="btn dis" style="left:1328px;top:511px;width:122px;height:24px"></div>
<div class="t" style="left:1336px;top:516px;font-size:13px;line-height:13px;font-weight:400;color:#ababab;letter-spacing:0.429px;">Commit &amp; Deploy</div>
<div class="btn" style="left:1460px;top:511px;width:29px;height:24px"></div>
<div class="dot" style="left:1469.5px;top:521.5px"></div>
<div class="dot" style="left:1473.5px;top:521.5px"></div>
<div class="dot" style="left:1477.5px;top:521.5px"></div>
<svg class="ic" style="left:1499px;top:513px" width="19" height="17" viewBox="0 0 19 17"><path d="M9.2 0.9 L17.8 15.6 L0.6 15.6 Z" fill="#e9bc45" stroke="#e9bc45" stroke-width="0.9" stroke-linejoin="round"/><rect x="8.45" y="6.2" width="1.5" height="4.6" fill="#fff"/><rect x="8.45" y="11.9" width="1.5" height="1.7" fill="#fff"/></svg>
<div class="rline" style="top:582px"></div>
<div class="t" style="left:99px;top:557px;font-size:13px;line-height:13px;font-weight:400;color:#2d5fdc;letter-spacing:0.0px;">ATL_CriblCoffee</div>
<div class="tog" style="top:557px"><div class="knob"></div></div>
<div class="t" style="left:495px;top:557px;font-size:13px;line-height:13px;font-weight:400;color:#2d5fdc;letter-spacing:0px;">0</div>
<svg class="ic" style="left:582px;top:553px" width="18" height="18" viewBox="0 0 18 18"><circle cx="9" cy="9" r="8" fill="none" stroke="#7c7c7c" stroke-width="2" stroke-dasharray="5.03 1.25" stroke-dashoffset="5.655"/></svg>
<svg class="ic" style="left:668px;top:553px" width="18" height="18" viewBox="0 0 18 18"><circle cx="9" cy="9" r="8" fill="none" stroke="#7c7c7c" stroke-width="2" stroke-dasharray="5.03 1.25" stroke-dashoffset="5.655"/></svg>
<div class="t" style="left:755px;top:557px;font-size:13px;line-height:13px;font-weight:400;color:#2d5fdc;letter-spacing:0px;">0</div>
<div class="t" style="left:842px;top:557px;font-size:13px;line-height:13px;font-weight:400;color:#2d5fdc;letter-spacing:0.0px;">View</div>
<div class="t" style="left:906px;top:557px;font-size:13px;line-height:13px;font-weight:400;color:#2d5fdc;letter-spacing:0.317px;">7603764</div>
<div class="btn" style="left:992px;top:552px;width:69px;height:24px"></div>
<svg class="ic" style="left:1000px;top:556px" width="16" height="16" viewBox="0 0 16 16"><path d="M3.0 4.4 A6.1 6.1 0 1 1 3.0 11.6" fill="none" stroke="#666" stroke-width="1.7"/><path d="M0.8 5.2 L5 8 L0.8 10.8 Z" fill="#666"/><path d="M6.4 5.64 A2.6 2.6 0 1 1 6.4 10.36 A3.2 3.2 0 0 0 6.4 5.64 Z" fill="#666"/></svg>
<div class="t" style="left:1020px;top:557px;font-size:13px;line-height:13px;font-weight:400;color:#4a4a4a;letter-spacing:0.667px;">None</div>
<svg class="ic" style="left:1173px;top:555px" width="14" height="16" viewBox="0 0 14 16"><path d="M3.4 12.2 V6.6 Q3.4 3.4 5.9 2.8 L7 1.9 L8.1 2.8 Q10.6 3.4 10.6 6.6 V12.2" fill="none" stroke="#3d3d3d" stroke-width="1.15"/><line x1="1.9" y1="12.4" x2="12.1" y2="12.4" stroke="#3d3d3d" stroke-width="1.2"/><path d="M5.9 13.6 Q7 15 8.1 13.6" fill="none" stroke="#3d3d3d" stroke-width="1"/></svg>
<div class="btn" style="left:1229px;top:552px;width:94px;height:24px"></div>
<div class="t" style="left:1237px;top:557px;font-size:13px;line-height:13px;font-weight:400;color:#474747;letter-spacing:0.327px;">Add Subfleet</div>
<div class="btn dis" style="left:1328px;top:552px;width:122px;height:24px"></div>
<div class="t" style="left:1336px;top:557px;font-size:13px;line-height:13px;font-weight:400;color:#ababab;letter-spacing:0.429px;">Commit &amp; Deploy</div>
<div class="btn" style="left:1460px;top:552px;width:29px;height:24px"></div>
<div class="dot" style="left:1469.5px;top:562.5px"></div>
<div class="dot" style="left:1473.5px;top:562.5px"></div>
<div class="dot" style="left:1477.5px;top:562.5px"></div>
<div class="rline" style="top:623px"></div>
<div class="t" style="left:99px;top:598px;font-size:13px;line-height:13px;font-weight:400;color:#2d5fdc;letter-spacing:0.057px;">DFW_CriblCoffee</div>
<div class="tog" style="top:598px"><div class="knob"></div></div>
<div class="t" style="left:495px;top:598px;font-size:13px;line-height:13px;font-weight:400;color:#2d5fdc;letter-spacing:0px;">0</div>
<svg class="ic" style="left:582px;top:594px" width="18" height="18" viewBox="0 0 18 18"><circle cx="9" cy="9" r="8" fill="none" stroke="#7c7c7c" stroke-width="2" stroke-dasharray="5.03 1.25" stroke-dashoffset="5.655"/></svg>
<svg class="ic" style="left:668px;top:594px" width="18" height="18" viewBox="0 0 18 18"><circle cx="9" cy="9" r="8" fill="none" stroke="#7c7c7c" stroke-width="2" stroke-dasharray="5.03 1.25" stroke-dashoffset="5.655"/></svg>
<div class="t" style="left:755px;top:598px;font-size:13px;line-height:13px;font-weight:400;color:#2d5fdc;letter-spacing:0px;">1</div>
<div class="t" style="left:842px;top:598px;font-size:13px;line-height:13px;font-weight:400;color:#2d5fdc;letter-spacing:0.0px;">View</div>
<div class="t" style="left:906px;top:598px;font-size:13px;line-height:13px;font-weight:400;color:#2d5fdc;letter-spacing:-0.017px;">caeeba1</div>
<div class="btn" style="left:992px;top:593px;width:69px;height:24px"></div>
<svg class="ic" style="left:1000px;top:597px" width="16" height="16" viewBox="0 0 16 16"><path d="M3.0 4.4 A6.1 6.1 0 1 1 3.0 11.6" fill="none" stroke="#666" stroke-width="1.7"/><path d="M0.8 5.2 L5 8 L0.8 10.8 Z" fill="#666"/><path d="M6.4 5.64 A2.6 2.6 0 1 1 6.4 10.36 A3.2 3.2 0 0 0 6.4 5.64 Z" fill="#666"/></svg>
<div class="t" style="left:1020px;top:598px;font-size:13px;line-height:13px;font-weight:400;color:#4a4a4a;letter-spacing:0.667px;">None</div>
<svg class="ic" style="left:1173px;top:596px" width="14" height="16" viewBox="0 0 14 16"><path d="M3.4 12.2 V6.6 Q3.4 3.4 5.9 2.8 L7 1.9 L8.1 2.8 Q10.6 3.4 10.6 6.6 V12.2" fill="none" stroke="#3d3d3d" stroke-width="1.15"/><line x1="1.9" y1="12.4" x2="12.1" y2="12.4" stroke="#3d3d3d" stroke-width="1.2"/><path d="M5.9 13.6 Q7 15 8.1 13.6" fill="none" stroke="#3d3d3d" stroke-width="1"/></svg>
<div class="btn" style="left:1229px;top:593px;width:94px;height:24px"></div>
<div class="t" style="left:1237px;top:598px;font-size:13px;line-height:13px;font-weight:400;color:#474747;letter-spacing:0.327px;">Add Subfleet</div>
<div class="btn dis" style="left:1328px;top:593px;width:122px;height:24px"></div>
<div class="t" style="left:1336px;top:598px;font-size:13px;line-height:13px;font-weight:400;color:#ababab;letter-spacing:0.429px;">Commit &amp; Deploy</div>
<div class="btn" style="left:1460px;top:593px;width:29px;height:24px"></div>
<div class="dot" style="left:1469.5px;top:603.5px"></div>
<div class="dot" style="left:1473.5px;top:603.5px"></div>
<div class="dot" style="left:1477.5px;top:603.5px"></div>
<div class="rline" style="top:664px"></div>
<div class="t" style="left:99px;top:639px;font-size:13px;line-height:13px;font-weight:400;color:#2d5fdc;letter-spacing:0.0px;">LHR_CriblCoffee</div>
<div class="tog" style="top:639px"><div class="knob"></div></div>
<div class="t" style="left:495px;top:639px;font-size:13px;line-height:13px;font-weight:400;color:#2d5fdc;letter-spacing:0px;">0</div>
<svg class="ic" style="left:582px;top:635px" width="18" height="18" viewBox="0 0 18 18"><circle cx="9" cy="9" r="8" fill="none" stroke="#7c7c7c" stroke-width="2" stroke-dasharray="5.03 1.25" stroke-dashoffset="5.655"/></svg>
<svg class="ic" style="left:668px;top:635px" width="18" height="18" viewBox="0 0 18 18"><circle cx="9" cy="9" r="8" fill="none" stroke="#7c7c7c" stroke-width="2" stroke-dasharray="5.03 1.25" stroke-dashoffset="5.655"/></svg>
<div class="t" style="left:755px;top:639px;font-size:13px;line-height:13px;font-weight:400;color:#2d5fdc;letter-spacing:0px;">0</div>
<div class="t" style="left:842px;top:639px;font-size:13px;line-height:13px;font-weight:400;color:#2d5fdc;letter-spacing:0.0px;">View</div>
<div class="t" style="left:906px;top:639px;font-size:13px;line-height:13px;font-weight:400;color:#2d5fdc;letter-spacing:0.467px;">a6e2f7f</div>
<div class="btn" style="left:992px;top:634px;width:69px;height:24px"></div>
<svg class="ic" style="left:1000px;top:638px" width="16" height="16" viewBox="0 0 16 16"><path d="M3.0 4.4 A6.1 6.1 0 1 1 3.0 11.6" fill="none" stroke="#666" stroke-width="1.7"/><path d="M0.8 5.2 L5 8 L0.8 10.8 Z" fill="#666"/><path d="M6.4 5.64 A2.6 2.6 0 1 1 6.4 10.36 A3.2 3.2 0 0 0 6.4 5.64 Z" fill="#666"/></svg>
<div class="t" style="left:1020px;top:639px;font-size:13px;line-height:13px;font-weight:400;color:#4a4a4a;letter-spacing:0.667px;">None</div>
<svg class="ic" style="left:1173px;top:637px" width="14" height="16" viewBox="0 0 14 16"><path d="M3.4 12.2 V6.6 Q3.4 3.4 5.9 2.8 L7 1.9 L8.1 2.8 Q10.6 3.4 10.6 6.6 V12.2" fill="none" stroke="#3d3d3d" stroke-width="1.15"/><line x1="1.9" y1="12.4" x2="12.1" y2="12.4" stroke="#3d3d3d" stroke-width="1.2"/><path d="M5.9 13.6 Q7 15 8.1 13.6" fill="none" stroke="#3d3d3d" stroke-width="1"/></svg>
<div class="btn" style="left:1229px;top:634px;width:94px;height:24px"></div>
<div class="t" style="left:1237px;top:639px;font-size:13px;line-height:13px;font-weight:400;color:#474747;letter-spacing:0.327px;">Add Subfleet</div>
<div class="btn dis" style="left:1328px;top:634px;width:122px;height:24px"></div>
<div class="t" style="left:1336px;top:639px;font-size:13px;line-height:13px;font-weight:400;color:#ababab;letter-spacing:0.429px;">Commit &amp; Deploy</div>
<div class="btn" style="left:1460px;top:634px;width:29px;height:24px"></div>
<div class="dot" style="left:1469.5px;top:644.5px"></div>
<div class="dot" style="left:1473.5px;top:644.5px"></div>
<div class="dot" style="left:1477.5px;top:644.5px"></div>
<div class="rline" style="top:705px"></div>
<div class="t" style="left:99px;top:680px;font-size:13px;line-height:13px;font-weight:400;color:#2d5fdc;letter-spacing:0.164px;">MUC_CriblCoffee</div>
<div class="tog" style="top:680px"><div class="knob"></div></div>
<div class="t" style="left:495px;top:680px;font-size:13px;line-height:13px;font-weight:400;color:#2d5fdc;letter-spacing:0px;">0</div>
<svg class="ic" style="left:582px;top:676px" width="18" height="18" viewBox="0 0 18 18"><circle cx="9" cy="9" r="8" fill="none" stroke="#7c7c7c" stroke-width="2" stroke-dasharray="5.03 1.25" stroke-dashoffset="5.655"/></svg>
<svg class="ic" style="left:668px;top:676px" width="18" height="18" viewBox="0 0 18 18"><circle cx="9" cy="9" r="8" fill="none" stroke="#7c7c7c" stroke-width="2" stroke-dasharray="5.03 1.25" stroke-dashoffset="5.655"/></svg>
<div class="t" style="left:755px;top:680px;font-size:13px;line-height:13px;font-weight:400;color:#2d5fdc;letter-spacing:0px;">0</div>
<div class="t" style="left:842px;top:680px;font-size:13px;line-height:13px;font-weight:400;color:#2d5fdc;letter-spacing:0.0px;">View</div>
<div class="t" style="left:906px;top:680px;font-size:13px;line-height:13px;font-weight:400;color:#2d5fdc;letter-spacing:0.433px;">2295e56</div>
<div class="btn" style="left:992px;top:675px;width:69px;height:24px"></div>
<svg class="ic" style="left:1000px;top:679px" width="16" height="16" viewBox="0 0 16 16"><path d="M3.0 4.4 A6.1 6.1 0 1 1 3.0 11.6" fill="none" stroke="#666" stroke-width="1.7"/><path d="M0.8 5.2 L5 8 L0.8 10.8 Z" fill="#666"/><path d="M6.4 5.64 A2.6 2.6 0 1 1 6.4 10.36 A3.2 3.2 0 0 0 6.4 5.64 Z" fill="#666"/></svg>
<div class="t" style="left:1020px;top:680px;font-size:13px;line-height:13px;font-weight:400;color:#4a4a4a;letter-spacing:0.667px;">None</div>
<svg class="ic" style="left:1173px;top:678px" width="14" height="16" viewBox="0 0 14 16"><path d="M3.4 12.2 V6.6 Q3.4 3.4 5.9 2.8 L7 1.9 L8.1 2.8 Q10.6 3.4 10.6 6.6 V12.2" fill="none" stroke="#3d3d3d" stroke-width="1.15"/><line x1="1.9" y1="12.4" x2="12.1" y2="12.4" stroke="#3d3d3d" stroke-width="1.2"/><path d="M5.9 13.6 Q7 15 8.1 13.6" fill="none" stroke="#3d3d3d" stroke-width="1"/></svg>
<div class="btn" style="left:1229px;top:675px;width:94px;height:24px"></div>
<div class="t" style="left:1237px;top:680px;font-size:13px;line-height:13px;font-weight:400;color:#474747;letter-spacing:0.327px;">Add Subfleet</div>
<div class="btn dis" style="left:1328px;top:675px;width:122px;height:24px"></div>
<div class="t" style="left:1336px;top:680px;font-size:13px;line-height:13px;font-weight:400;color:#ababab;letter-spacing:0.429px;">Commit &amp; Deploy</div>
<div class="btn" style="left:1460px;top:675px;width:29px;height:24px"></div>
<div class="dot" style="left:1469.5px;top:685.5px"></div>
<div class="dot" style="left:1473.5px;top:685.5px"></div>
<div class="dot" style="left:1477.5px;top:685.5px"></div></div></body></html>
